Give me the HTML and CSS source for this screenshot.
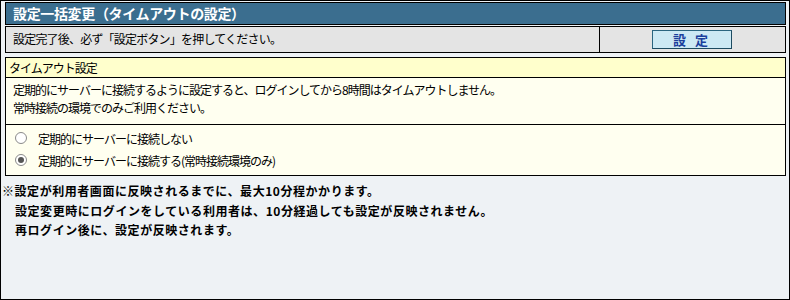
FILE: index.html
```html
<!DOCTYPE html>
<html lang="ja">
<head>
<meta charset="utf-8">
<link rel="stylesheet" href="styles.css">
</head>
<body>
<div class="frame">
  <div class="title">設定一括変更（タイムアウトの設定）</div>
  <div class="bar">
    <div class="bar-msg">設定完了後、必ず「設定ボタン」を押してください。</div>
    <div class="bar-act"><button class="btn" type="button">設 定</button></div>
  </div>
  <div class="panel">
    <div class="panel-head">タイムアウト設定</div>
    <div class="panel-desc">
      <p>定期的にサーバーに接続するように設定すると、ログインしてから8時間はタイムアウトしません。</p>
      <p>常時接続の環境でのみご利用ください。</p>
    </div>
    <div class="panel-opts">
      <label class="opt"><span class="radio"></span>定期的にサーバーに接続しない</label>
      <label class="opt"><span class="radio on"></span>定期的にサーバーに接続する(常時接続環境のみ)</label>
    </div>
  </div>
  <div class="notes">
    <p>※設定が利用者画面に反映されるまでに、最大10分程かかります。</p>
    <p class="ind">設定変更時にログインをしている利用者は、10分経過しても設定が反映されません。</p>
    <p class="ind">再ログイン後に、設定が反映されます。</p>
  </div>
</div>
</body>
</html>
```
FILE: styles.css
```css
* { box-sizing: border-box; }
html, body { margin: 0; padding: 0; }
body {
  font-family: "Noto Sans CJK JP", "Noto Sans", sans-serif;
  font-size: 12px;
  color: #000;
}
p { margin: 0; }
.frame {
  width: 790px;
  height: 300px;
  border: 1px solid #000;
  background: #eef2f5;
  padding: 1px 3px 0 4px;
  display: flex;
  flex-direction: column;
}
.title {
  height: 23px;
  border: 1px solid #000;
  background: #3b6e8f;
  color: #fff;
  font-weight: bold;
  font-size: 14px;
  letter-spacing: -0.35px;
  line-height: 20px;
  padding-left: 7px;
}
.bar {
  margin-top: 1px;
  height: 27px;
  border: 1px solid #000;
  background: #e4e4e4;
  display: flex;
}
.bar-msg {
  width: 594px;
  border-right: 1px solid #000;
  padding-left: 7px;
  line-height: 24px;
  letter-spacing: -0.8px;
}
.bar-act {
  flex: 1;
  padding: 3px 0 0 52px;
}
.btn {
  width: 80px;
  height: 19px;
  margin: 0;
  padding: 0;
  border: 1px solid #2b6580;
  border-right-color: #1c4a60;
  border-bottom-color: #1c4a60;
  background: #cde9f4;
  color: #1b3f9c;
  font-family: "Noto Sans CJK JP", sans-serif;
  font-weight: bold;
  font-size: 13px;
  line-height: 16px;
  letter-spacing: 3px;
}
.panel {
  margin-top: 4px;
  border: 1px solid #000;
  background: #fffff0;
  letter-spacing: -1px;
}
.panel-head {
  height: 20px;
  background: #ffffcc;
  border-bottom: 1px solid #000;
  padding-left: 3px;
  line-height: 19px;
}
.panel-desc {
  height: 47px;
  border-bottom: 1px solid #000;
  padding: 3px 0 0 7px;
  line-height: 18px;
}
.panel-opts {
  height: 50px;
  padding: 4px 0 0 9px;
  display: flex;
  flex-direction: column;
  gap: 4px;
}
.opt {
  display: flex;
  align-items: center;
  height: 18px;
}
.radio {
  width: 12px;
  height: 12px;
  border: 1px solid #8a8a8a;
  border-radius: 50%;
  background: #fff;
  margin-right: 11px;
  position: relative;
}
.radio.on::after {
  content: "";
  position: absolute;
  left: 2px;
  top: 2px;
  width: 6px;
  height: 6px;
  border-radius: 50%;
  background: #555;
}
.notes {
  margin-left: -3px;
  padding-top: 5px;
  font-weight: bold;
  line-height: 19.5px;
  letter-spacing: 0.55px;
}
.notes .ind { padding-left: 13px; }
```
